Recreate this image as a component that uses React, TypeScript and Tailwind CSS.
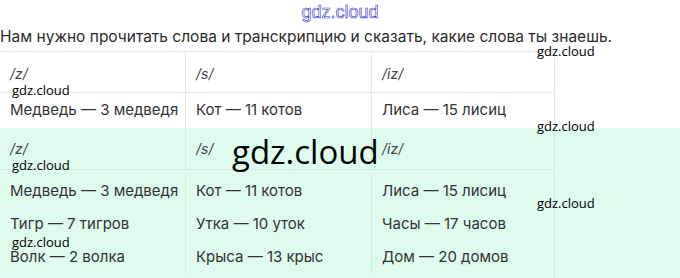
const FONT = "font-['Inter','Noto_Sans',sans-serif]"

const TOP_ROWS = [['Медведь — 3 медведя', 'Кот — 11 котов', 'Лиса — 15 лисиц']]

const GREEN_ROWS = [
  ['Медведь — 3 медведя', 'Кот — 11 котов', 'Лиса — 15 лисиц'],
  ['Тигр — 7 тигров', 'Утка — 10 уток', 'Часы — 17 часов'],
  ['Волк — 2 волка', 'Крыса — 13 крыс', 'Дом — 20 домов'],
]

const HEADS = ['/z/', '/s/', '/iz/']

const Mark = ({ className }: { className: string }) => (
  <span className={`absolute font-['Open_Sans',sans-serif] text-[13px] leading-none text-black ${className}`}>
    gdz.cloud
  </span>
)

const App = () => {
  return (
    <div className={`relative h-[278px] w-[680px] overflow-hidden bg-white text-[#333] ${FONT}`}>
      <div className="flex h-[26px] justify-center pt-[2px]">
        <span className="font-['Liberation_Sans',sans-serif] text-[18px] leading-[20px] text-white [-webkit-text-stroke:0.6px_#2f2fd0]">
          gdz.cloud
        </span>
      </div>
      <p className="h-[25px] text-[15.5px] leading-[22px] text-[#2b2b2b]">
        Нам нужно прочитать слова и транскрипцию и сказать, какие слова ты знаешь.
      </p>

      <div className="w-[555px] border-t border-r border-[#e6e6e6]">
        <div className="grid h-[41px] grid-cols-[185px_186px_1fr] border-b border-[#e6e6e6]">
          {HEADS.map((h, i) => (
            <div key={h} className={`pl-[10px] pt-[12px] text-[14px] italic leading-5 text-[#444] ${i > 0 ? 'border-l border-[#e6e6e6]' : ''}`}>
              {h}
            </div>
          ))}
        </div>
        {TOP_ROWS.map((row, r) => (
          <div key={r} className="grid h-[35px] grid-cols-[185px_186px_1fr]">
            {row.map((c, i) => (
              <div key={c} className={`flex items-center pl-[10px] text-[15px] ${i > 0 ? 'border-l border-[#e6e6e6]' : ''}`}>
                {c}
              </div>
            ))}
          </div>
        ))}
      </div>

      <div className="h-[151px] bg-[#dffbec]">
        <div className="h-full w-[555px] border-r border-[#d3eadd]">
          <div className="grid h-[42px] grid-cols-[185px_186px_1fr] border-b border-[#d3eadd]">
            {HEADS.map((h, i) => (
              <div key={h} className={`pl-[10px] pt-[11px] text-[14px] italic leading-5 text-[#444] ${i > 0 ? 'border-l border-[#d3eadd]' : ''}`}>
                {h}
              </div>
            ))}
          </div>
          <div className="grid grid-cols-[185px_186px_1fr] pt-[5px]">
            {GREEN_ROWS.map((row, r) =>
              row.map((c, i) => (
                <div key={`${r}-${i}`} className={`flex h-[33px] items-center pl-[10px] text-[15px] ${i > 0 ? 'border-l border-[#d3eadd]' : ''}`}>
                  {c}
                </div>
              ))
            )}
          </div>
        </div>
      </div>

      <Mark className="left-[12px] top-[84px]" />
      <Mark className="left-[537px] top-[45px]" />
      <Mark className="left-[537px] top-[120px]" />
      <Mark className="left-[12px] top-[159px]" />
      <Mark className="left-[537px] top-[197px]" />
      <Mark className="left-[12px] top-[236px]" />
      <span className="absolute left-[232px] top-[131px] font-['Open_Sans',sans-serif] text-[33px] leading-[42px] text-black">
        gdz.cloud
      </span>
    </div>
  )
}

export default App
